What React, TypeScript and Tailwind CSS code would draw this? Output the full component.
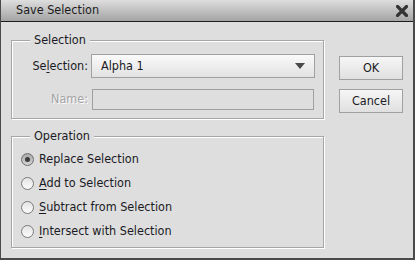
import React from "react";

function Radio({ checked }: { checked?: boolean }) {
  return checked ? (
    <div className="w-[13px] h-[13px] rounded-full border border-[#6e6e6e] bg-gradient-to-b from-[#a8a8a8] to-[#d4d4d4] flex items-center justify-center shrink-0">
      <div className="w-[5px] h-[5px] rounded-full bg-[#3c3c3c]" />
    </div>
  ) : (
    <div className="w-[13px] h-[13px] rounded-full border border-[#7a7a7a] bg-gradient-to-b from-[#e4e4e4] to-[#fbfbfb] shrink-0" />
  );
}

function Group({ title, className, children }: { title: string; className?: string; children: React.ReactNode }) {
  return (
    <div className={"relative border border-[#a6a6a6] shadow-[inset_1px_1px_0_#fff,1px_1px_0_#fff] " + (className ?? "")}>
      <div className="absolute -top-[9px] left-[18px] px-[4px] bg-[#dedede] leading-[16px]">{title}</div>
      {children}
    </div>
  );
}

export default function App() {
  const rows: { u: string; post: string; checked?: boolean }[] = [
    { u: "", post: "Replace Selection", checked: true },
    { u: "A", post: "dd to Selection" },
    { u: "S", post: "ubtract from Selection" },
    { u: "I", post: "ntersect with Selection" },
  ];
  return (
    <div className="w-[415px] h-[260px] bg-[#dedede] border-l border-r-2 border-b-2 border-[#4a4a4a] flex flex-col font-['DejaVu_Sans_Condensed','Liberation_Sans',sans-serif] text-[12.5px] text-[#1a1a24]">
      <div className="h-[22px] shrink-0 bg-gradient-to-b from-[#dedede] to-[#a4a4a4] border-b border-[#1e1e1e] flex items-center justify-between pl-[15px] pr-[4px]">
        <span className="text-[12.5px] text-[#1c1c1c]">Save Selection</span>
        <svg width="12" height="12" viewBox="0 0 12 12" className="mr-[1px]">
          <path d="M1.5 1.5 L10.5 10.5 M10.5 1.5 L1.5 10.5" stroke="#333" strokeWidth="3.2" strokeLinecap="square" />
        </svg>
      </div>
      <div className="flex pl-[10px] pt-[18px]">
        <div className="w-[313px] flex flex-col gap-[17px]">
          <Group title="Selection" className="h-[79px] pt-[13px]">
            <div className="flex items-center">
              <div className="w-[76px] text-right">
                Se<span className="underline underline-offset-2">l</span>ection:
              </div>
              <div className="ml-[3px] w-[224px] h-[24px] border border-[#a0a0a0] bg-gradient-to-b from-[#fafafa] to-[#e2e2e2] flex items-center justify-between pl-[9px] pr-[9px]">
                <span>Alpha 1</span>
                <svg width="10" height="6" viewBox="0 0 10 6">
                  <path d="M0 0 H10 L5 6 Z" fill="#4a4a4a" />
                </svg>
              </div>
            </div>
            <div className="flex items-center mt-[11px]">
              <div className="w-[76px] text-right text-[#a4a4a4] [text-shadow:1px_1px_0_#fff]">Name:</div>
              <div className="ml-[4px] w-[222px] h-[21px] border border-[#a0a0a0] bg-[#dedede]" />
            </div>
          </Group>
          <Group title="Operation" className="h-[112px] pt-[10px] pl-[9px]">
            <div className="flex flex-col">
              {rows.map((r, i) => (
                <div key={i} className="h-[24px] flex items-center gap-[5px]">
                  <Radio checked={r.checked} />
                  <span>
                    {r.u && <span className="underline underline-offset-2">{r.u}</span>}
                    {r.post}
                  </span>
                </div>
              ))}
            </div>
          </Group>
        </div>
        <div className="ml-[15px] pt-[16px] flex flex-col gap-[9px]">
          <div className="w-[64px] h-[24px] border border-[#a0a0a0] bg-gradient-to-b from-[#f6f6f6] to-[#e0e0e0] flex items-center justify-center">OK</div>
          <div className="w-[64px] h-[24px] border border-[#a0a0a0] bg-gradient-to-b from-[#f6f6f6] to-[#e0e0e0] flex items-center justify-center">Cancel</div>
        </div>
      </div>
    </div>
  );
}
